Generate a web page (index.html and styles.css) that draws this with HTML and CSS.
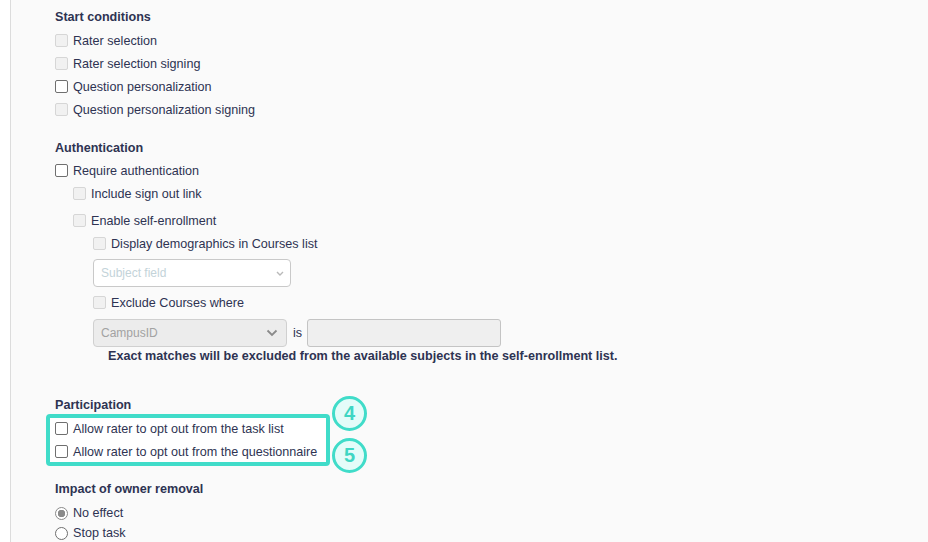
FILE: index.html
```html
<!DOCTYPE html>
<html>
<head>
<meta charset="utf-8">
<link rel="stylesheet" href="styles.css">
</head>
<body>
<div class="panel">
  <h3 class="heading">Start conditions</h3>
  <div class="rows">
    <label class="row"><input type="checkbox" disabled><span>Rater selection</span></label>
    <label class="row"><input type="checkbox" disabled><span>Rater selection signing</span></label>
    <label class="row"><input type="checkbox"><span>Question personalization</span></label>
    <label class="row"><input type="checkbox" disabled><span>Question personalization signing</span></label>
  </div>

  <h3 class="heading sec">Authentication</h3>
  <div class="rows auth">
    <label class="row"><input type="checkbox"><span>Require authentication</span></label>
    <div class="indent1">
      <label class="row"><input type="checkbox" disabled><span>Include sign out link</span></label>
      <label class="row gap"><input type="checkbox" disabled><span>Enable self-enrollment</span></label>
      <div class="indent2">
        <label class="row"><input type="checkbox" disabled><span>Display demographics in Courses list</span></label>
        <div class="select select-light">
          <span>Subject field</span>
          <svg class="chev-small" viewBox="0 0 8 5" width="8" height="5"><path d="M1 1 L4 4 L7 1" fill="none" stroke="#b9b9b9" stroke-width="1.4"/></svg>
        </div>
        <label class="row gap"><input type="checkbox" disabled><span>Exclude Courses where</span></label>
        <div class="field-row">
          <div class="select select-gray">
            <span>CampusID</span>
            <svg class="chev" viewBox="0 0 12 8" width="12" height="8"><path d="M1.5 1.5 L6 6 L10.5 1.5" fill="none" stroke="#8a8a8a" stroke-width="1.8"/></svg>
          </div>
          <span class="is">is</span>
          <div class="textbox"></div>
        </div>
        <div class="note">Exact matches will be excluded from the available subjects in the self-enrollment list.</div>
      </div>
    </div>
  </div>

  <h3 class="heading part">Participation</h3>
  <div class="highlight">
    <label class="row hrow"><input type="checkbox"><span>Allow rater to opt out from the task list</span></label>
    <label class="row hrow"><input type="checkbox"><span>Allow rater to opt out from the questionnaire</span></label>
    <div class="badge badge4">4</div>
    <div class="badge badge5">5</div>
  </div>

  <h3 class="heading impact">Impact of owner removal</h3>
  <div class="radios">
    <label class="rrow"><input type="radio" name="own" checked disabled><span>No effect</span></label>
    <label class="rrow"><input type="radio" name="own"><span>Stop task</span></label>
  </div>
</div>
</body>
</html>
```

FILE: styles.css
```css
html, body {
  margin: 0;
  padding: 0;
  background: #ffffff;
  height: 100%;
  overflow: hidden;
}

body {
  font-family: "Liberation Sans", Arial, sans-serif;
  font-size: 12.6px;
  color: #2e3352;
}

.panel {
  margin-left: 10px;
  border-left: 1px solid #dcdcdc;
  background: #fafafa;
  min-height: 100%;
  box-sizing: border-box;
  padding: 7px 0 0 44px;
}

.heading {
  margin: 0;
  font-size: 12.6px;
  font-weight: bold;
  line-height: 20px;
  color: #2e3352;
}

.heading.sec { margin-top: 17px; }
.heading.part { margin-top: 30px; }
.heading.impact { margin-top: 13px; }

.rows { margin-top: 2px; }
.rows.auth { margin-top: 1px; }

.row {
  display: flex;
  align-items: center;
  height: 23px;
  white-space: nowrap;
}

.row.gap { margin-top: 4px; }

.row input {
  appearance: none;
  -webkit-appearance: none;
  box-sizing: border-box;
  margin: 0 5px 0 0;
  width: 13px;
  height: 13px;
  border: 1px solid #6f6f6f;
  border-radius: 2px;
  background: #ffffff;
}

.row input:disabled {
  border-color: #d6d6d6;
  background: #f1f1f1;
}

.indent1 { padding-left: 18px; }
.indent2 { padding-left: 20px; }

.select {
  display: flex;
  align-items: center;
  justify-content: space-between;
  box-sizing: border-box;
  height: 28px;
  border: 1px solid #c9c9c9;
  border-radius: 4px;
  padding: 0 6px 0 7px;
  font-size: 12px;
}

.select-light {
  width: 198px;
  margin-top: 4px;
  margin-bottom: 4px;
  background: #ffffff;
  color: #c3d3d9;
}

.select-gray {
  width: 194px;
  background: #ececec;
  color: #a2a2a2;
  border-color: #d0d0d0;
  padding-right: 8px;
}

.field-row {
  display: flex;
  align-items: center;
  margin-top: 5px;
  height: 28px;
}

.is {
  margin: 0 5px 0 6px;
  color: #2e3352;
}

.textbox {
  width: 194px;
  height: 28px;
  box-sizing: border-box;
  background: #efefef;
  border: 1px solid #c4c4c4;
  border-radius: 3px;
}

.note {
  padding-left: 15px;
  font-weight: bold;
  line-height: 18px;
  white-space: nowrap;
}

.highlight {
  position: relative;
  margin-top: -1px;
  margin-left: -9px;
  width: 284px;
  box-sizing: border-box;
  border: 4px solid #40dcc9;
  border-radius: 4px;
  background: #ffffff;
  padding: 0 0 0 5px;
}

.hrow {
  height: 21px;
}

.hrow + .hrow { margin-top: 2px; }

.badge {
  position: absolute;
  left: 282px;
  width: 35px;
  height: 35px;
  box-sizing: border-box;
  border: 3px solid #40dcc9;
  border-radius: 50%;
  background: #e4fcf9;
  color: #3fd6c3;
  font-family: "Liberation Sans", Arial, sans-serif;
  font-weight: bold;
  font-size: 20px;
  display: flex;
  align-items: center;
  justify-content: center;
}

.badge4 { top: -22px; }
.badge5 { top: 20px; }

.radios { margin-top: 4px; }

.rrow {
  display: flex;
  align-items: center;
  height: 20px;
  white-space: nowrap;
}

.rrow input {
  appearance: none;
  -webkit-appearance: none;
  box-sizing: border-box;
  margin: 0 5px 0 0;
  width: 13px;
  height: 13px;
  border: 1px solid #6f6f6f;
  border-radius: 50%;
  background: #ffffff;
}

.rrow input:checked {
  border-color: #8a8a8a;
  background: radial-gradient(circle, #8a8a8a 0 3.5px, #ffffff 4px);
}
```
